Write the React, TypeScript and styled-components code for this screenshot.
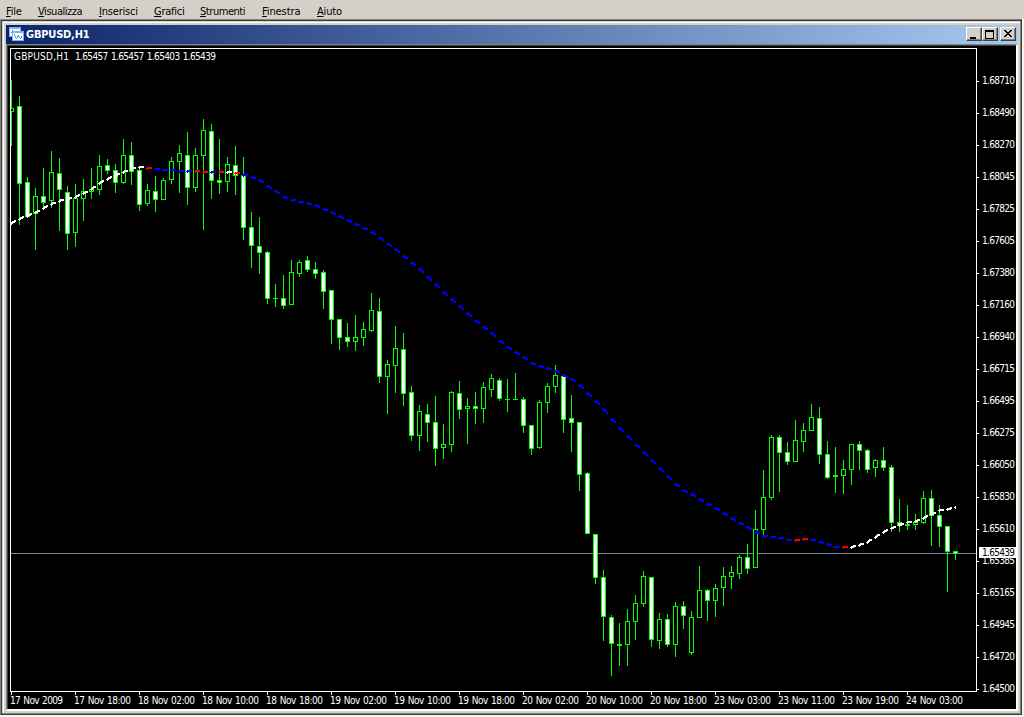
import React from 'react';
import styled, { createGlobalStyle } from 'styled-components';

const GlobalStyle = createGlobalStyle`
  * {
    box-sizing: border-box;
  }

  body {
    margin: 0;
    background: #f4f3ee;
    overflow: hidden;
    font-family: 'DejaVu Sans Condensed', 'DejaVu Sans', sans-serif;
    font-stretch: condensed;
  }
`;

const Desktop = styled.div`
  display: flex;
  flex-direction: column;
  width: 1024px;
  height: 717px;
  background: #f4f3ee;
`;

const MenuBar = styled.nav`
  display: flex;
  height: 19px;
  padding: 5px 0 0 6px;
  background: #d4d0c8;
`;

const MenuItem = styled.span<{ $width: number; $spacing?: number }>`
  width: ${({ $width }) => $width}px;
  font-size: 11px;
  line-height: 14px;
  letter-spacing: ${({ $spacing }) => $spacing ?? 0}px;
  white-space: nowrap;
  color: #000;

  &::first-letter {
    text-decoration: underline;
  }
`;

const ChildWindow = styled.section`
  display: flex;
  flex-direction: column;
  width: 1022px;
  height: 696px;
  padding: 5px 0 0 5px;
  border: 1px solid;
  border-color: #808080 #404040 #404040 #808080;
  background: #d4d0c8;
  box-shadow: inset 1px 1px 0 #404040, inset -1px -1px 0 #808080,
    inset 2px 2px 0 #d4d0c8, inset 3px 3px 0 #fff;
`;

const TitleBar = styled.header`
  display: flex;
  align-items: center;
  width: 1012px;
  height: 19px;
  padding: 0 2px 1px 3px;
  flex-shrink: 0;
  background: linear-gradient(to right, #0a246a, #a6caf0);
`;

const Title = styled.h1`
  flex: 1;
  margin: 1px 0 0 2px;
  font-size: 11px;
  line-height: 18px;
  font-weight: bold;
  letter-spacing: -0.2px;
  color: #fff;
`;

const WindowButton = styled.button<{ $gap?: number }>`
  display: flex;
  width: 16px;
  height: 14px;
  margin: 0 0 0 ${({ $gap }) => $gap ?? 0}px;
  padding: 0;
  border: 1px solid;
  border-color: #fff #404040 #404040 #fff;
  box-shadow: inset -1px -1px 0 #808080;
  background: #d4d0c8;
`;

const ChartArea = styled.main`
  width: 1012px;
  height: 667px;
  padding: 1px 0 0 1px;
  border: solid;
  border-width: 1px 2px 2px 1px;
  border-color: #808080 #fff #fff #808080;
  background: #000;
  box-shadow: inset 1px 1px 0 #404040;

  svg {
    display: block;
  }
`;

type Kind = 'up' | 'down';

// high, body top, body bottom, low
type Candle = [number, number, number, number, Kind];

const u: Kind = 'up';
const d: Kind = 'down';

const candles: Candle[] = [
  [80, 108, 111, 145, u], [96, 106, 183, 224, d], [177, 182, 216, 217, d], [188, 196, 213, 249, u],
  [168, 196, 202, 207, d], [151, 172, 200, 207, u], [158, 173, 189, 230, d], [186, 192, 233, 249, d],
  [184, 198, 232, 246, u], [179, 191, 198, 220, u], [168, 189, 191, 198, u], [155, 166, 189, 194, u],
  [159, 165, 170, 173, d], [164, 170, 182, 192, d], [139, 155, 182, 183, u], [142, 155, 171, 184, d],
  [168, 170, 204, 210, d], [184, 190, 203, 205, u], [176, 191, 199, 211, d], [178, 180, 199, 199, u],
  [157, 161, 179, 183, u], [145, 153, 161, 192, u], [132, 155, 187, 204, d], [148, 155, 187, 191, u],
  [119, 130, 155, 229, u], [124, 131, 180, 198, d], [139, 180, 182, 193, d], [157, 164, 181, 191, u],
  [146, 165, 175, 194, d], [157, 175, 227, 239, d], [212, 227, 245, 267, d], [217, 246, 252, 273, d],
  [251, 252, 298, 303, d], [284, 298, 298, 306, u], [275, 298, 305, 308, d], [260, 272, 304, 304, u],
  [260, 262, 273, 276, u], [256, 260, 269, 271, d], [262, 269, 273, 278, d], [270, 272, 291, 308, d],
  [290, 290, 319, 343, d], [319, 319, 337, 349, d], [323, 337, 341, 346, d], [315, 337, 341, 350, u],
  [322, 329, 337, 345, u], [293, 310, 330, 331, u], [298, 311, 376, 382, d], [360, 364, 376, 413, u],
  [326, 348, 365, 392, u], [333, 349, 393, 405, d], [386, 392, 435, 440, d], [405, 411, 435, 450, u],
  [404, 414, 422, 441, d], [396, 422, 448, 465, d], [424, 444, 447, 458, u], [391, 392, 444, 451, u],
  [381, 393, 409, 418, d], [398, 406, 408, 443, u], [392, 406, 408, 423, d], [382, 387, 408, 422, u],
  [374, 378, 389, 396, u], [378, 380, 398, 400, d], [379, 399, 399, 411, u], [373, 399, 399, 399, u],
  [397, 399, 425, 432, d], [425, 425, 448, 454, d], [400, 402, 447, 448, u], [383, 386, 402, 412, u],
  [365, 375, 386, 392, u], [374, 376, 419, 432, d], [395, 418, 422, 451, d], [422, 422, 474, 490, d],
  [472, 473, 533, 533, d], [534, 534, 577, 583, d], [570, 577, 616, 640, d], [615, 617, 643, 675, d],
  [623, 644, 645, 665, u], [609, 621, 644, 665, u], [595, 603, 621, 639, u], [571, 576, 603, 606, u],
  [577, 577, 639, 646, d], [613, 619, 640, 648, u], [614, 619, 644, 646, d], [602, 606, 644, 656, u],
  [601, 606, 615, 628, d], [611, 617, 652, 654, u], [566, 590, 617, 617, u], [589, 590, 600, 620, d],
  [584, 588, 600, 616, u], [567, 576, 587, 605, u], [566, 572, 576, 588, u], [555, 557, 573, 578, u],
  [544, 557, 568, 573, d], [510, 529, 567, 567, u], [470, 497, 529, 537, u], [435, 437, 497, 499, u],
  [435, 437, 452, 491, d], [442, 452, 461, 464, d], [420, 440, 461, 461, u], [423, 430, 441, 451, u],
  [404, 417, 430, 430, u], [407, 418, 454, 463, d], [441, 454, 477, 478, d], [447, 475, 476, 492, u],
  [460, 469, 475, 493, u], [444, 444, 469, 484, u], [441, 444, 450, 469, d], [449, 450, 469, 472, d],
  [459, 460, 467, 476, u], [447, 460, 467, 470, d], [465, 467, 522, 531, d], [499, 522, 525, 531, d],
  [505, 524, 525, 529, u], [514, 522, 524, 529, u], [491, 498, 522, 523, u], [490, 498, 515, 545, d],
  [505, 515, 526, 546, d], [526, 526, 551, 591, d], [551, 551, 553, 559, d],
];

const average = [
  222.5, 218.5, 215.5, 212, 208, 203.7, 200.7, 199, 196.7, 193, 189, 182.7, 178.7, 175.3, 171.7, 168.7,
  167, 167.7, 168.5, 169.5, 170, 170.5, 171, 171, 171.8, 171.8, 172, 172, 172.5, 174.5, 177, 180.3,
  185.5, 191, 196.7, 199.7, 201.5, 203.3, 205.3, 209, 212.3, 216, 220, 224, 227.7, 232, 237.5, 243.5,
  249, 256, 262.5, 269, 277, 284, 292, 299, 306, 313, 320.5, 327, 333, 340.5, 347, 352,
  357.3, 362.7, 366, 368, 370.5, 375, 379, 385, 393, 401, 409, 418.5, 428, 436, 444.5, 452,
  460, 467.7, 476, 484, 490, 494, 499, 503.5, 508, 513, 518, 522.7, 527, 531.5, 535.5, 536.7,
  537.7, 539.5, 540.3, 539.3, 539.7, 541.7, 544, 546.5, 547, 547, 544.7, 541.7, 536.7, 531.7, 528, 525,
  522.3, 521.3, 517.7, 514, 510.3, 509, 507.3,
];

const redBars = [17, 23, 24, 26, 28, 98, 99, 104];

const averageColor = (i: number) => {
  if (redBars.includes(i)) return '#ff0000';
  return i < 17 || i === 27 || i > 104 ? '#ffffff' : '#0000ff';
};

const prices = [
  '1.68710', '1.68490', '1.68270', '1.68045', '1.67825', '1.67605', '1.67380', '1.67160', '1.66940', '1.66715',
  '1.66495', '1.66275', '1.66050', '1.65830', '1.65610', '1.65385', '1.65165', '1.64945', '1.64720', '1.64500',
];

const times = [
  '17 Nov 2009', '17 Nov 18:00', '18 Nov 02:00', '18 Nov 10:00', '18 Nov 18:00', '19 Nov 02:00', '19 Nov 10:00',
  '19 Nov 18:00', '20 Nov 02:00', '20 Nov 10:00', '20 Nov 18:00', '23 Nov 03:00', '23 Nov 11:00', '23 Nov 19:00',
  '24 Nov 03:00',
];

const Label = styled.text<{ $dark?: boolean }>`
  font-family: 'DejaVu Sans Condensed', 'DejaVu Sans', sans-serif;
  font-stretch: condensed;
  font-size: 10px;
  word-spacing: 1px;
  fill: ${({ $dark }) => ($dark ? '#000' : '#fff')};
`;

const barX = (i: number) => 11 + 8 * i;

const Candles = () => (
  <>
    {candles.map(([high, top, bottom, low, kind], i) => {
      const x = barX(i);
      return (
        <g key={x}>
          <rect x={x} y={high} width="1" height={low - high + 1} fill="#00ff00" />
          <rect x={x - 2} y={top} width="5" height={bottom - top + 1} fill="#00ff00" />
          {bottom - top > 1 && (
            <rect
              x={x - 1}
              y={top + 1}
              width="3"
              height={bottom - top - 1}
              fill={kind === 'down' ? '#ffffff' : '#000000'}
            />
          )}
        </g>
      );
    })}
  </>
);

// every bar gets its own short dash, stepped pixel by pixel, with a gap before the next one
const MovingAverage = () => (
  <>
    {average.map((y, i) => {
      const x = barX(i);
      const next = average[i + 1] ?? y;
      const run = i === average.length - 1 ? 0 : 4;
      const slope = (next - y) / 8;
      return (
        <g key={x} fill={averageColor(i)}>
          <rect x={x - 1} y={Math.round(y)} width="1" height="1" />
          <rect x={x} y={Math.round(y) - 1} width="1" height="3" />
          {Array.from({ length: run }, (_, step) => (
            <rect key={step} x={x + step} y={Math.round(y + slope * step) - 1} width="2" height="2" />
          ))}
        </g>
      );
    })}
  </>
);

const Chart = () => (
  <svg width="1008" height="663" viewBox="8 46 1008 663" shapeRendering="crispEdges">
    <defs>
      <clipPath id="plot">
        <rect x="11" y="49" width="965" height="642" />
      </clipPath>
    </defs>
    <g clipPath="url(#plot)">
      <rect x="11" y="553" width="965" height="1" fill="#778899" />
      <Candles />
      <MovingAverage />
    </g>
    <rect x="10.5" y="48.5" width="966" height="643" fill="none" stroke="#fff" />
    <Label x="14" y="60" textLength="55">
      GBPUSD,H1
    </Label>
    <Label x="75" y="60" textLength="141">
      1.65457 1.65457 1.65403 1.65439
    </Label>
    {prices.map((price, i) => (
      <g key={price}>
        <rect x="977" y={81 + 32 * i} width="2" height="1" fill="#fff" />
        <Label x="982" y={84 + 32 * i} textLength="33">
          {price}
        </Label>
      </g>
    ))}
    <rect x="979" y="547" width="37" height="11" fill="#fff" />
    <Label x="982" y="556" textLength="33" $dark>
      1.65439
    </Label>
    {times.map((time, i) => (
      <g key={time}>
        <rect x={11 + 64 * i} y="692" width="1" height="3" fill="#fff" />
        <Label x={10 + 64 * i} y="704" textLength={i === 0 ? 53 : 57}>
          {time}
        </Label>
      </g>
    ))}
  </svg>
);

const ChartIcon = () => (
  <svg width="15" height="15" viewBox="0 0 15 15" shapeRendering="crispEdges">
    <rect x="0" y="0" width="12" height="10" fill="#7db0f4" />
    <rect x="1" y="2" width="10" height="7" fill="#fff" />
    <path d="M2 5h1V3h1v2h1V4h1v2H5v1H4V5H3v1H2z" fill="#3f7fd8" />
    <rect x="3" y="4" width="12" height="10" fill="#7db0f4" />
    <rect x="4" y="6" width="10" height="7" fill="#fff" />
    <path d="M5 7h1v2h1v2H6V9H5zM7 11h1V9h1V8h1v2h1v1h1V9h1v2h-1v1h-1v-1h-1v-1H9v1H8v1H7z" fill="#5b97e8" />
  </svg>
);

const App: React.FC = () => {
  return (
    <Desktop>
      <GlobalStyle />
      <MenuBar>
        <MenuItem $width={32} $spacing={-0.2}>File</MenuItem>
        <MenuItem $width={61} $spacing={-0.45}>Visualizza</MenuItem>
        <MenuItem $width={55} $spacing={-0.2}>Inserisci</MenuItem>
        <MenuItem $width={46} $spacing={-0.25}>Grafici</MenuItem>
        <MenuItem $width={62} $spacing={-0.45}>Strumenti</MenuItem>
        <MenuItem $width={55} $spacing={-0.1}>Finestra</MenuItem>
        <MenuItem $width={40} $spacing={-0.2}>Aiuto</MenuItem>
      </MenuBar>
      <ChildWindow>
        <TitleBar>
          <ChartIcon />
          <Title>GBPUSD,H1</Title>
          <WindowButton aria-label="Minimize">
            <svg width="14" height="12" shapeRendering="crispEdges">
              <rect x="3" y="9" width="6" height="2" fill="#000" />
            </svg>
          </WindowButton>
          <WindowButton aria-label="Maximize">
            <svg width="14" height="12" shapeRendering="crispEdges">
              <path d="M2 2h9v9H2zM3 4v6h7V4z" fill="#000" fillRule="evenodd" />
            </svg>
          </WindowButton>
          <WindowButton $gap={2} aria-label="Close">
            <svg width="14" height="12" shapeRendering="crispEdges">
              <path
                d="M3 2h2v1h1v1h2V3h1V2h2v1h-1v1H9v1H8v1h1v1h1v1h1v1H9V8H8V7H6v1H5v1H3V8h1V7h1V6h1V5H5V4H4V3H3z"
                fill="#000"
              />
            </svg>
          </WindowButton>
        </TitleBar>
        <ChartArea>
          <Chart />
        </ChartArea>
      </ChildWindow>
    </Desktop>
  );
};

export default App;
